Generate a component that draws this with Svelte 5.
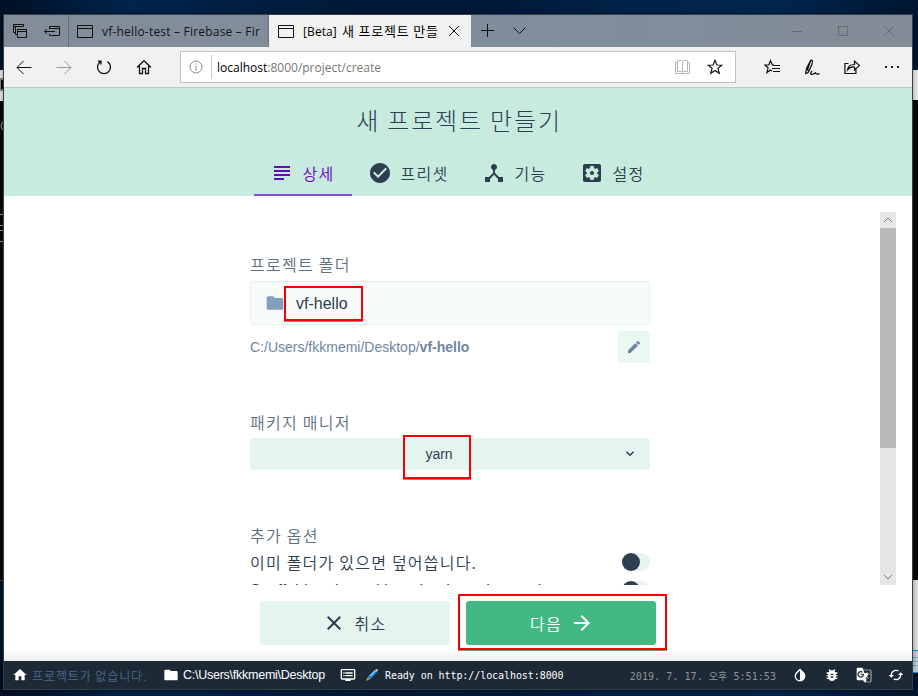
<script>
  const tabs = [
    { id: 'details', label: '상세', d: 'M14 17H4v2h10v-2zm6-8H4v2h16V9zM4 15h16v-2H4v2zM4 5v2h16V5H4z' },
    { id: 'presets', label: '프리셋', d: 'M12 2C6.48 2 2 6.48 2 12s4.48 10 10 10 10-4.48 10-10S17.52 2 12 2zm-2 15l-5-5 1.41-1.41L10 14.17l7.59-7.59L19 8l-9 9z' },
    { id: 'features', label: '기능', d: 'M17 16l-4-4V8.82C14.16 8.4 15 7.3 15 6c0-1.66-1.34-3-3-3S9 4.34 9 6c0 1.3.84 2.4 2 2.82V12l-4 4H3v5h5v-3.05l4-4.2 4 4.2V21h5v-5h-4z' },
    { id: 'config', label: '설정', d: 'M12 10c-1.1 0-2 .9-2 2s.9 2 2 2 2-.9 2-2-.9-2-2-2zm7-7H5c-1.11 0-2 .9-2 2v14c0 1.1.89 2 2 2h14c1.11 0 2-.9 2-2V5c0-1.1-.89-2-2-2zm-1.75 9c0 .23-.02.46-.05.68l1.48 1.16c.13.11.17.3.08.45l-1.4 2.42c-.09.15-.27.21-.43.15l-1.74-.7c-.36.28-.76.51-1.18.69l-.26 1.85c-.03.17-.18.3-.35.3h-2.8c-.17 0-.32-.13-.35-.29l-.26-1.85c-.43-.18-.82-.41-1.18-.69l-1.74.7c-.16.06-.34 0-.43-.15l-1.4-2.42c-.09-.15-.05-.34.08-.45l1.48-1.16c-.03-.23-.05-.46-.05-.69 0-.23.02-.46.05-.68l-1.48-1.16c-.13-.11-.17-.3-.08-.45l1.4-2.42c.09-.15.27-.21.43-.15l1.74.7c.36-.28.76-.51 1.18-.69l.26-1.85c.03-.17.18-.3.35-.3h2.8c.17 0 .32.13.35.29l.26 1.85c.43.18.82.41 1.18.69l1.74-.7c.16-.06.34 0 .43.15l1.4 2.42c.09.15.05.34-.08.45l-1.48 1.16c.03.23.05.46.05.69z' },
  ];
  let active = $state('details');
  let overwrite = $state(false);
  let bare = $state(false);
</script>

<div class="desktop">
  <svg class="behind" width="918" height="696" shape-rendering="crispEdges">
    <rect x="0" y="70" width="4" height="31" fill="#f0f0f0" />
    <rect x="0" y="78" width="4" height="13" fill="#8b8b8b" />
    <rect x="1" y="80" width="3" height="9" fill="#080808" />
    <rect x="0" y="101" width="4" height="480" fill="#0b0806" />
    <rect x="0" y="580" width="4" height="1" fill="#44464a" />
    <path d="M4 122Q1 122 1 126T4 130" fill="none" stroke="#aaa" shape-rendering="auto" />
    <path d="M3 152v2M3 158v2M3 200v2M3 206v2M0 214.5h4M0 225.5h4M0 230.5h4M0 241.5h4" stroke="#999" />
    <rect x="912" y="70" width="6" height="31" fill="#f0f0f0" />
    <rect x="912" y="100" width="6" height="480" fill="#070808" />
    <rect x="912" y="580" width="6" height="93" fill="#e4e4e4" />
    <rect x="912" y="650" width="6" height="23" fill="#c5dae6" />
    <path d="M912 650.5h6M912 672.5h6" stroke="#2797d4" />
    <path d="M913 657.5h5M913 661.5h5M913 665.5h5" stroke="#8899a3" stroke-dasharray="3 1" />
  </svg>

  <div class="window">
    <div class="titlebar">
      <div class="tools">
        <svg width="16" height="16" viewBox="0 0 16 16"><path d="M3.500 9.500H1.500v-8h10v2M1.500 3.500h10M5.500 11.500h-2v-8" /><path d="M5.500 6.500h9v8h-9zM5.500 8.500h9" /></svg>
        <svg width="18" height="16" viewBox="0 0 18 16"><path d="M6.500 6v-2.500h10v9h-10V11M6.500 5.500h10M12 8.500H1.500M4 6L1.500 8.500L4 11" /></svg>
      </div>
      <div class="btab">
        <svg width="16" height="14" viewBox="0 0 16 14"><path d="M.5 1.500h15v12h-15zM.5 4.500h15" /></svg>
        <span class="t1">vf-hello-test – Firebase – Fir</span>
      </div>
      <div class="btab on">
        <svg width="16" height="14" viewBox="0 0 16 14"><path d="M.5 1.500h15v12h-15zM.5 4.500h15" /></svg>
        <span class="t2">[Beta] <em>새 프로젝트 만들</em></span>
        <svg class="close" width="10" height="10" viewBox="0 0 10 10"><path d="M0 0L10 10M10 0L0 10" /></svg>
      </div>
      <svg class="plus" width="14" height="14" viewBox="0 0 14 14"><path d="M6.500 0v13M0 6.500h13" /></svg>
      <svg class="chev" width="14" height="8" viewBox="0 0 14 8"><path d="M.5 .5L6.500 6.500L12.500 .5" /></svg>
      <div class="controls">
        <svg width="10" height="10" viewBox="0 0 10 10"><path d="M0 5.500h10" /></svg>
        <svg width="10" height="10" viewBox="0 0 10 10"><path d="M.5 .5h9v9h-9z" /></svg>
        <svg width="10" height="10" viewBox="0 0 10 10"><path d="M0 0L10 10M10 0L0 10" /></svg>
      </div>
    </div>

    <div class="toolbar">
      <div class="nav">
        <svg width="16" height="16" viewBox="0 0 16 16"><path d="M15.500 8.500H1M7.500 2L1 8.500L7.500 15" /></svg>
        <svg class="dim" width="16" height="16" viewBox="0 0 16 16"><path d="M.5 8.500H15M8.500 2L15 8.500L8.500 15" /></svg>
        <svg width="16" height="16" viewBox="0 0 16 16"><path d="M4.600 2.600A6.500 6.500 0 1 0 11.400 2.600M2 2.200h3v3.300" stroke-width="1.300" /></svg>
        <svg width="16" height="16" viewBox="0 0 16 16"><path d="M1 8.500L8 1.700L15 8.500M3.500 7v7.500h3V9.500h3v5h3V7" stroke-width="1.300" /></svg>
      </div>
      <div class="address">
        <svg width="14" height="14" viewBox="0 0 14 14"><circle cx="7" cy="7" r="6" /><path d="M7 6v4.500M7 3.500v1.200" /></svg>
        <i></i>
        <span class="url"><b>localhost</b>:8000/project/create</span>
        <svg class="book" width="16" height="16" viewBox="0 0 16 16"><path d="M2.500 1.500h4l1 1 1-1h4v11h-4l-1 1-1-1h-4zM7.500 2.500v11M2.500 3.500h-2v11h14v-11h-2" /></svg>
        <svg width="16" height="16" viewBox="0 0 16 16"><path d="M8 1.300l1.900 4.700 5 .2-4 3.100 1.400 5L8 11.500l-4.300 2.800 1.400-5-4-3.100 5-.2z" stroke-width="1.200" /></svg>
      </div>
      <div class="actions">
        <svg width="16" height="16" viewBox="0 0 16 16"><path d="M10 6H8.400L6.500 1.500 4.800 6H.8l3.300 2.800-1.200 4.700 3.600-2.600 1.700 1M9 6.500h7M8 9.500h8M9 12.500h7" stroke-width="1.200" /></svg>
        <svg width="16" height="17" viewBox="0 0 16 17"><path d="M1.500 15l1-5.500L6.500 1.500Q7.500 .5 8.500 2L8 5 4.500 13 1.500 15M2.800 10l2 2M6.500 2L3.800 10M8 12q-2.500 3-.5 3.300t4-1.500q1 2 4 .8" stroke-width="1.200" /></svg>
        <svg width="16" height="16" viewBox="0 0 16 16"><path d="M4.500 4.500H.9v10h11V10M3.500 11q.5-5.500 7-5.500V2l5 4.500-5 4.500V8q-4.500-.5-7 3z" stroke-width="1.200" /></svg>
        <svg class="dots" width="16" height="16" viewBox="0 0 16 16"><path d="M1 7h2v2H1zM7 7h2v2H7zM13 7h2v2h-2z" /></svg>
      </div>
    </div>

    <header>
      <h1>새 프로젝트 만들기</h1>
      <nav>
        {#each tabs as t}
          <button class:active={active === t.id} onclick={() => (active = t.id)}>
            <svg width="24" height="24" viewBox="0 0 24 24"><path d={t.d} /></svg><span>{t.label}</span>
          </button>
        {/each}
      </nav>
    </header>

    <main>
      <div class="scroll">
        <div class="form">
          <label class="lab" for="folder">프로젝트 폴더</label>
          <div class="input" id="folder">
            <svg width="20" height="20" viewBox="0 0 24 24"><path d="M10 4H4c-1.100 0-2 .9-2 2v12c0 1.100.9 2 2 2h16c1.100 0 2-.9 2-2V8c0-1.100-.9-2-2-2h-8z" /></svg>
            <span>vf-hello</span>
          </div>
          <div class="path">
            <span>C:/Users/fkkmemi/Desktop/<b>vf-hello</b></span>
            <button class="edit" aria-label="edit"><svg width="16" height="16" viewBox="0 0 24 24"><path d="M3 17.250V21h3.750L17.810 9.940l-3.750-3.750zM20.710 7.040c.39-.39.39-1.020 0-1.410l-2.340-2.340c-.39-.39-1.020-.39-1.410 0l-1.830 1.830 3.750 3.750z" /></svg></button>
          </div>
          <div class="lab pm">패키지 매니저</div>
          <div class="select">
            <span>yarn</span>
            <svg width="16" height="16" viewBox="0 0 24 24"><path d="M7.410 7.840L12 12.420l4.590-4.580L18 9.250l-6 6-6-6z" /></svg>
          </div>
          <div class="lab opt">추가 옵션</div>
          <button class="row" onclick={() => (overwrite = !overwrite)}>
            <span class="ko">이미 폴더가 있으면 덮어씁니다.</span><span class="switch" class:checked={overwrite}></span>
          </button>
          <button class="row" onclick={() => (bare = !bare)}>
            <span class="en">Scaffold project without beginner instructions</span><span class="switch" class:checked={bare}></span>
          </button>
        </div>
        <div class="bar">
          <svg width="16" height="16" viewBox="0 0 16 16"><path d="M4 10l4-4 4 4" /></svg>
          <div class="thumb"></div>
          <svg width="16" height="16" viewBox="0 0 16 16"><path d="M4 6l4 4 4-4" /></svg>
        </div>
      </div>
      <div class="buttons">
        <button class="cancel"><svg width="24" height="24" viewBox="0 0 24 24"><path d="M19 6.410L17.590 5 12 10.590 6.410 5 5 6.410 10.590 12 5 17.590 6.410 19 12 13.410 17.590 19 19 17.590 13.410 12z" /></svg><span>취소</span></button>
        <button class="next"><span>다음</span><svg width="24" height="24" viewBox="0 0 24 24"><path d="M12 4l-1.410 1.410L16.170 11H4v2h12.170l-5.580 5.590L12 20l8-8z" /></svg></button>
      </div>
    </main>

    <footer>
      <svg width="16" height="16" viewBox="0 0 24 24"><path d="M10 20v-6h4v6h5v-8h3L12 3 2 12h3v8z" /></svg>
      <span class="noproj">프로젝트가 없습니다.</span>
      <svg width="16" height="16" viewBox="0 0 24 24"><path d="M10 4H4c-1.100 0-2 .9-2 2v12c0 1.100.9 2 2 2h16c1.100 0 2-.9 2-2V8c0-1.100-.9-2-2-2h-8z" /></svg>
      <span class="cwd">C:\Users\fkkmemi\Desktop</span>
      <svg width="16" height="16" viewBox="0 0 24 24"><path d="M21 3H3c-1.100 0-2 .9-2 2v12c0 1.100.9 2 2 2h5v2h8v-2h5c1.100 0 2-.9 2-2V5c0-1.100-.9-2-2-2zm0 14H3V5h18v12zm-2-9H8v2h11V8zm0 4H8v2h11v-2zM7 8H5v2h2V8zm0 4H5v2h2v-2z" /></svg>
      <svg class="rocket" width="12" height="12" viewBox="0 0 12 12"><path d="M0 12l2-4 2 2z" fill="#e9a53a" /><path d="M1.500 8L8 1.500 11 0l.5 1L10.500 4 4 10.500z" fill="#1e83d8" /><path d="M4 7L9.500 1.500" stroke="#8bd0ff" stroke-width="1.300" /><path d="M9 1l2.500-1 .5.500-1 2.500z" fill="#e6c66d" /></svg>
      <span class="mono">Ready on http://localhost:8000</span>
      <span class="date">2019. 7. 17. 오후 5:51:53</span>
      <div class="icons">
        <svg width="16" height="16" viewBox="0 0 24 24"><path d="M17.660 8L12 2.350 6.340 8C4.780 9.560 4 11.640 4 13.640s.78 4.110 2.340 5.670 3.610 2.350 5.660 2.350 4.100-.79 5.660-2.350S20 15.640 20 13.640 19.220 9.560 17.660 8zM6 14c.01-2 .62-3.270 1.760-4.400L12 5.270v14.400c-2 0-3.500-.7-4.400-1.600S6 16 6 14z" /></svg>
        <svg width="16" height="16" viewBox="0 0 24 24"><path d="M20 8h-2.810c-.45-.78-1.070-1.450-1.820-1.960L17 4.410 15.590 3l-2.170 2.170C12.960 5.060 12.490 5 12 5s-.96.060-1.410.170L8.410 3 7 4.410l1.620 1.630C7.880 6.550 7.260 7.220 6.810 8H4v2h2.090c-.05.33-.09.66-.09 1v1H4v2h2v1c0 .34.04.67.09 1H4v2h2.810c1.040 1.790 2.970 3 5.190 3s4.150-1.210 5.190-3H20v-2h-2.090c.05-.33.09-.66.09-1v-1h2v-2h-2v-1c0-.34-.04-.67-.09-1H20V8zm-6 8h-4v-2h4v2zm0-4h-4v-2h4v2z" /></svg>
        <svg width="16" height="16" viewBox="0 0 24 24"><path d="M21 4H11l-1-3H3c-1.100 0-2 .9-2 2v15c0 1.100.9 2 2 2h8l1 3h9c1.100 0 2-.9 2-2V6c0-1.100-.9-2-2-2zM7 16c-2.760 0-5-2.240-5-5s2.240-5 5-5c1.350 0 2.480.5 3.350 1.300L9.030 8.570c-.38-.36-1.040-.78-2.030-.78-1.740 0-3.150 1.440-3.150 3.210S5.260 14.210 7 14.210c2.010 0 2.840-1.440 2.920-2.410H7v-1.710h4.680c.07.31.12.61.12 1.020C11.800 13.970 9.890 16 7 16zm15 5c0 .55-.45 1-1 1h-7l2-2-1.190-3.950.98-.98 2.650 2.670.73-.73-2.700-2.660c.83-.95 1.500-2.070 1.820-3.290H21v-1.040h-3.650V8h-1.040v1.040h-3.700L11.290 5H21c.55 0 1 .45 1 1v15z" /></svg>
        <svg width="16" height="16" viewBox="0 0 24 24"><path d="M19 8l-4 4h3c0 3.310-2.690 6-6 6-1.010 0-1.970-.25-2.800-.7l-1.460 1.460C8.970 19.540 10.430 20 12 20c4.420 0 8-3.580 8-8h3zM6 12c0-3.310 2.690-6 6-6 1.010 0 1.970.25 2.800.7l1.460-1.460C15.030 4.460 13.570 4 12 4c-4.420 0-8 3.580-8 8H1l4 4 4-4z" /></svg>
      </div>
    </footer>
  </div>

  <div class="mark m1"></div>
  <div class="mark m2"></div>
  <div class="mark m3"></div>
</div>

<style>
  :global(body) { margin: 0; }
  * { box-sizing: border-box; }
  svg { flex: none; display: block; }
  button { border: 0; padding: 0; margin: 0; background: none; color: inherit; font: inherit; letter-spacing: inherit; }
  .desktop {
    position: relative; width: 918px; height: 696px; overflow: hidden; padding: 14px 0 0 3px;
    font-family: "Liberation Sans", "Noto Sans CJK KR", sans-serif; color: #2c3e50;
    background: linear-gradient(90deg, #001026 0%, #00244b 14%, #001938 40%, #001a3a 56%, #002348 68%, #00254d 85%, #001630 100%);
  }
  .behind { position: absolute; left: 0; top: 0; }
  .window { position: relative; width: 910px; height: 676px; border: 1px solid #343d48; display: flex; flex-direction: column; background: #fff; box-shadow: 0 1px 7px rgba(0, 0, 0, .4); }
  .titlebar { height: 32px; flex: none; display: flex; align-items: center; background: linear-gradient(90deg, #828d99, #7f8d9c 65%, #838c96); font: 12px "Open Sans", "Noto Sans CJK KR", sans-serif; color: #151515; }
  .titlebar svg, .toolbar svg { fill: none; stroke: #111; stroke-width: 1; }
  .tools { width: 64px; display: flex; gap: 15px; padding-left: 8px; }
  .btab { height: 32px; width: 200px; border-left: 1px solid #65707c; display: flex; align-items: center; padding-left: 8px; white-space: nowrap; }
  .btab span { margin-left: 9px; }
  .btab.on { width: 203px; padding-left: 9px; background: #f1f1f1; border-left: 1px solid #69737e; color: #000; }
  .t1 { width: 160px; letter-spacing: .2px; }
  .t2 { width: 137px; letter-spacing: .1px; }
  .t2 em { font: 13px/1 "Noto Sans CJK KR", sans-serif; letter-spacing: .8px; margin-left: 2px; }
  .close { margin-left: 9px; }
  .plus { margin-left: 10px; }
  .chev { margin-left: 18px; }
  .controls { margin-left: auto; margin-right: 18px; display: flex; gap: 36px; }
  .controls svg { stroke: #69696a; }
  .toolbar { height: 41px; flex: none; background: #f1f1f1; border-bottom: 1px solid #c5c5c5; display: flex; align-items: center; }
  .nav { display: flex; gap: 24px; width: 176px; padding-left: 12px; }
  .toolbar .dim { stroke: #999; }
  .address { width: 556px; height: 32px; border: 1px solid #c3c3c3; background: #fff; display: flex; align-items: center; padding: 0 12px 0 8px; font: 12px "Open Sans", sans-serif; color: #777; }
  .address svg:first-child { stroke: #8b8b8b; }
  .address i { width: 1px; height: 24px; background: #c9c9c9; margin: 0 5px 0 8px; }
  .address b { font-weight: 400; color: #000; }
  .toolbar .book { margin-left: auto; margin-right: 16px; stroke: #b7b7b7; }
  .actions { display: flex; gap: 24px; padding-left: 28px; align-items: center; }
  .toolbar .dots { fill: #222; stroke: none; }
  header { height: 108px; flex: none; background: #c7ebdf; display: flex; flex-direction: column; align-items: center; justify-content: space-between; }
  h1 { margin: 14px 0 0; padding-left: 2px; font-family: "Noto Sans CJK KR", sans-serif; font-size: 24px; line-height: 36px; font-weight: 300; letter-spacing: 1.85px; }
  nav { display: flex; height: 44px; font-family: "Noto Sans CJK KR", sans-serif; font-size: 16px; font-weight: 350; letter-spacing: 1.28px; }
  nav button { display: flex; align-items: center; gap: 8px; padding: 0 16px; border-bottom: 2px solid transparent; width: 98px; white-space: nowrap; }
  nav button:nth-child(2) { width: 114px; }
  nav span { padding-left: .5px; }
  nav svg { fill: #2c3e50; }
  nav .active { color: #6806c1; border-color: #8850d0; }
  nav .active svg { fill: #6806c1; }
  main { flex: 1; display: flex; flex-direction: column; background: linear-gradient(#fff 455px, #eee); }
  .scroll { height: 389px; overflow: hidden; display: flex; padding-left: 246px; }
  .form { width: 400px; padding-top: 56px; }
  .lab { display: block; font: 350 16px/24px "Noto Sans CJK KR", sans-serif; letter-spacing: 1.28px; color: #5e6f7f; }
  .input { margin-top: 5px; height: 44px; border: 1px solid #e0f4ec; border-radius: 3px; background: #f7fbfa; display: flex; align-items: center; padding-left: 14px; gap: 11px; font-size: 16px; }
  .input span { padding-top: 2px; }
  .input svg { fill: #849fbd; }
  .path { margin-top: 6px; display: flex; justify-content: space-between; align-items: center; font-size: 14px; color: #6f87a0; }
  .edit { width: 32px; height: 32px; border-radius: 3px; background: #eaf7f3; display: flex; align-items: center; justify-content: center; }
  .edit svg { fill: #6b82a0; }
  .pm { margin-top: 47px; }
  .select { margin-top: 4px; height: 32px; border-radius: 3px; background: #e4f4ee; display: flex; align-items: center; padding: 0 12px 0 8px; font-size: 14px; }
  .select span { flex: 1; text-align: center; padding-right: 2px; }
  .select svg { fill: #2c3e50; }
  .opt { margin-top: 53px; margin-bottom: 1px; }
  .row { display: flex; width: 400px; height: 28px; align-items: center; justify-content: space-between; font-size: 16px; white-space: nowrap; }
  .ko { font-family: "Noto Sans CJK KR", sans-serif; font-weight: 350; letter-spacing: 1.22px; }
  .en { padding-top: 2px; }
  .switch { width: 28px; height: 18px; border-radius: 9px; background: #e4f4ee; display: flex; align-items: center; }
  .switch::before { content: ""; width: 18px; height: 18px; border-radius: 50%; background: #2c3e50; }
  .switch.checked { justify-content: flex-end; }
  .bar { margin: 16px 0 0 230px; width: 16px; height: 373px; background: #e6e6e6; display: flex; flex-direction: column; }
  .bar svg { fill: none; stroke: #777; }
  .thumb { height: 220px; background: #b9b9b9; margin-bottom: auto; }
  .buttons { display: flex; gap: 16px; justify-content: center; padding-top: 16px; font: 350 16px "Noto Sans CJK KR", sans-serif; letter-spacing: 1.28px; }
  .buttons button { width: 190px; height: 44px; border-radius: 3px; display: flex; align-items: center; justify-content: center; gap: 8px; }
  .buttons .cancel { background: #e4f4ee; fill: #2c3e50; padding-right: 1px; }
  .buttons .next { background: #42b983; color: #fff; fill: #fff; padding-left: 2px; }
  footer { height: 28px; flex: none; background: #1d2935; display: flex; align-items: center; padding: 0 8px; color: #fff; fill: #fff; white-space: nowrap; font-size: 12px; }
  .noproj { width: 122px; margin: 0 9px 0 4px; font-family: "Noto Sans CJK KR", sans-serif; font-weight: 350; letter-spacing: .9px; color: #4a6a92; flex: none; }
  .cwd { width: 157px; margin-left: 4px; font-size: 12.500px; letter-spacing: -.25px; }
  .rocket { margin: 0 7px 0 10px; }
  .mono, .date { font: 10px "DejaVu Sans Mono", "Noto Sans CJK KR", monospace; }
  .mono { letter-spacing: -.07px; }
  .date { margin-left: auto; color: #8d949a; letter-spacing: .06px; }
  .icons { display: flex; gap: 16px; margin-left: 16px; }
  .mark { position: absolute; border: 2px solid #f80000; box-shadow: 0 1px 0 #8a8a8a; }
  .m1 { left: 284px; top: 286px; width: 79px; height: 35px; }
  .m2 { left: 403px; top: 435px; width: 68px; height: 44px; }
  .m3 { left: 458px; top: 594px; width: 209px; height: 56px; }
</style>
